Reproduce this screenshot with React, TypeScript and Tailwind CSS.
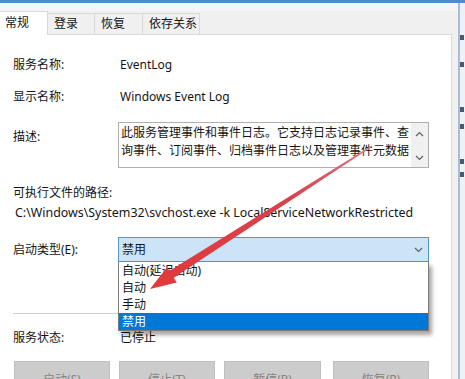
import React from "react";

const F = "font-['Noto_Sans','Noto_Sans_CJK_SC',sans-serif]";

function Chevron({ up = false }: { up?: boolean }) {
  return (
    <svg width="9" height="6" viewBox="0 0 9 6" className="block">
      <path
        d={up ? "M1 5 L4.5 1.5 L8 5" : "M1 1 L4.5 4.5 L8 1"}
        fill="none"
        stroke="#606060"
        strokeWidth="1.2"
      />
    </svg>
  );
}

export default function App() {
  const tabs = ["登录", "恢复", "依存关系"];
  const tabW = ["w-[47px]", "w-[48px]", "w-[57px]"];
  const btn =
    "h-[30px] shrink-0 bg-[#cccccc] border border-[#bfbfbf] text-[#858585] flex items-center justify-center pt-[8px]";
  return (
    <div
      className={`relative w-[465px] h-[379px] overflow-hidden bg-[#f0f0f0] text-[12px] text-[#151515] ${F}`}
    >
      <div className="h-[3px] shrink-0 bg-[#4b8dcd]" />
      <div className="flex h-[376px]">
        <div className="w-[458px] flex flex-col">
          <div className="h-[8px] shrink-0 bg-[#f5f5f5]" />
          {/* tabs */}
          <div className="flex h-[24px] shrink-0 items-end w-[452px]">
            <div className="h-[24px] w-[48px] bg-white border-t border-r border-[#d9d9d9] pl-[5px] leading-[22px]">
              常规
            </div>
            {tabs.map((t, i) => (
              <div
                key={t}
                className={`h-[22px] ${tabW[i]} border-t border-r border-b border-[#d9d9d9] pl-[6px] leading-[20px] bg-[#f0f0f0]`}
              >
                {t}
              </div>
            ))}
            <div className="flex-1 h-[22px] border-b border-[#d9d9d9]" />
          </div>
          {/* panel */}
          <div className="w-[452px] flex-1 min-h-0 overflow-hidden bg-white border-r border-[#d9d9d9] pl-[13px] pt-[21px] flex flex-col">
            <div className="flex h-[18px] shrink-0 items-center">
              <div className="w-[105px]">服务名称:</div>
              <div className="pl-[2px]">EventLog</div>
            </div>
            <div className="flex h-[18px] shrink-0 items-center mt-[14px]">
              <div className="w-[105px]">显示名称:</div>
              <div className="pl-[2px]">Windows Event Log</div>
            </div>
            <div className="flex shrink-0 mt-[16px]">
              <div className="w-[105px] pt-[6px] leading-[18px]">描述:</div>
              <div className="w-[311px] h-[46px] border border-[#b0b0b0] flex overflow-hidden">
                <div className="flex-1 pl-[2px] pt-[1px] leading-[18px] whitespace-nowrap overflow-hidden">
                  <div>此服务管理事件和事件日志。它支持日志记录事件、查</div>
                  <div>询事件、订阅事件、归档事件日志以及管理事件元数据</div>
                </div>
                <div className="w-[17px] bg-[#f0f0f0] flex flex-col items-center justify-between pt-[8px] pb-[6px]">
                  <Chevron up />
                  <Chevron />
                </div>
              </div>
            </div>
            <div className="h-[18px] shrink-0 leading-[18px] mt-[16px]">可执行文件的路径:</div>
            <div className="h-[18px] shrink-0 leading-[18px] mt-[2px] pl-[2px] whitespace-nowrap text-[12.4px]">
              C:\Windows\System32\svchost.exe -k LocalServiceNetworkRestricted
            </div>
            <div className="flex shrink-0 mt-[15px]">
              <div className="w-[105px] leading-[25px]">启动类型(E):</div>
              <div className="relative w-[311px] h-[25px] border border-[#5b93c7] bg-[#cce4f7] pl-[3px] flex items-center justify-between pr-[5px]">
                <span>禁用</span>
                <Chevron />
                <div className="absolute left-[-1px] top-[24px] w-[311px] bg-white border-x border-b border-[#7a7a7a] shadow-[3px_4px_4px_rgba(0,0,0,0.35)] z-10">
                  <div className="h-[17px] leading-[17px] pl-[3px]">自动(延迟启动)</div>
                  <div className="h-[17px] leading-[17px] pl-[3px]">自动</div>
                  <div className="h-[17px] leading-[17px] pl-[3px]">手动</div>
                  <div className="h-[17px] leading-[17px] pl-[3px] bg-[#0078d7] text-white">禁用</div>
                </div>
              </div>
            </div>
            <div className="mt-[51px] h-px shrink-0 w-[416px] bg-[#cfcfcf]" />
            <div className="flex h-[18px] shrink-0 items-center mt-[15px]">
              <div className="w-[105px]">服务状态:</div>
              <div className="pl-[2px]">已停止</div>
            </div>
            <div className="flex shrink-0 mt-[14px] ml-[1px]">
              <div className={`w-[96px] ${btn}`}>启动(S)</div>
              <div className={`ml-[9px] w-[96px] ${btn}`}>停止(T)</div>
              <div className={`ml-[9px] w-[97px] ${btn}`}>暂停(P)</div>
              <div className={`ml-[12px] w-[96px] ${btn}`}>恢复(R)</div>
            </div>
          </div>
        </div>
        {/* right strip: window behind */}
        <div className="w-[7px] border-l-2 border-[#a9bed3] bg-[#eef2f6] flex flex-col">
          <div className="mt-[32px] h-[5px] w-[4px] bg-[#4a5a6a]" />
          <div className="mt-[22px] h-[5px] w-[4px] bg-[#4a5a6a]" />
          <div className="mt-[40px] h-[5px] w-[4px] bg-[#4a5a6a]" />
          <div className="mt-[12px] h-[5px] w-[4px] bg-[#4a5a6a]" />
          <div className="mt-[30px] h-[5px] w-[4px] bg-[#4a5a6a]" />
          <div className="mt-[8px] h-[5px] w-[4px] bg-[#4a5a6a]" />
        </div>
      </div>
      {/* red annotation arrow */}
      <svg
        className="absolute inset-0 pointer-events-none z-20"
        width="465"
        height="379"
        viewBox="0 0 465 379"
      >
        <defs>
          <linearGradient id="g" x1="372" y1="146" x2="170" y2="276" gradientUnits="userSpaceOnUse">
            <stop offset="0" stopColor="#d9788a" />
            <stop offset="0.4" stopColor="#d9424c" />
            <stop offset="1" stopColor="#e03a3d" />
          </linearGradient>
        </defs>
        <polygon
          points="372.4,146.6 371.6,145.4 165.6,273.3 170,280.2"
          fill="url(#g)"
        />
        <polygon points="150,289 167,267.3 176.8,282.5" fill="#e03a3d" />
      </svg>
    </div>
  );
}
